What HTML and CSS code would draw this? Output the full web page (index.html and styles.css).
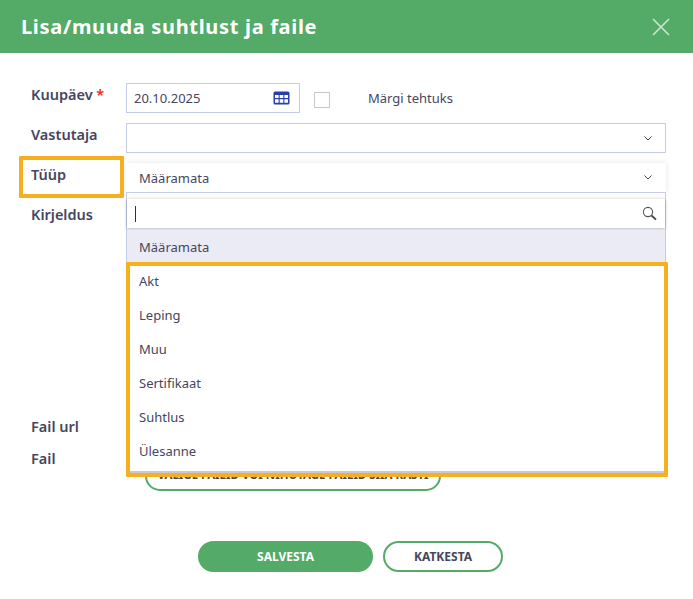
FILE: index.html
```html
<!DOCTYPE html>
<html lang="et">
<head>
<meta charset="utf-8">
<title>Lisa/muuda suhtlust ja faile</title>
<link rel="stylesheet" href="styles.css">
</head>
<body>
<div class="modal">
  <header class="head">
    <h1 class="title">Lisa/muuda suhtlust ja faile</h1>
    <svg class="close" width="18" height="18" viewBox="0 0 18 18"><path d="M1 1l16 16M17 1L1 17" stroke="#cfe6d5" stroke-width="1.6" fill="none"/></svg>
  </header>
  <form class="form">
    <div class="row">
      <label class="label">Kuupäev <span class="req">*</span></label>
      <div class="field date">
        <span>20.10.2025</span>
        <svg width="17" height="14" viewBox="0 0 17 14"><rect x="0.5" y="0.5" width="16" height="13" rx="1.5" fill="#2b3fa8"/><path d="M2 4h3.6v3H2zM6.7 4h3.6v3H6.7zM11.4 4H15v3h-3.6zM2 8.2h3.6v3.6H2zM6.7 8.2h3.6v3.6H6.7zM11.4 8.2H15v3.6h-3.6z" fill="#fff"/></svg>
      </div>
      <span class="check"></span>
      <span class="check-label">Märgi tehtuks</span>
    </div>
    <div class="row">
      <label class="label">Vastutaja</label>
      <div class="field select">
        <span></span>
        <svg class="chev" width="8" height="5" viewBox="0 0 8 5"><path d="M.5.5L4 4 7.5.5" stroke="#3f4160" stroke-width="1" fill="none"/></svg>
      </div>
    </div>
    <div class="row">
      <label class="label">Tüüp</label>
      <div class="field select open">
        <span class="sel-value">Määramata</span>
        <svg class="chev" width="8" height="5" viewBox="0 0 8 5"><path d="M.5.5L4 4 7.5.5" stroke="#3f4160" stroke-width="1" fill="none"/></svg>
        <div class="dropdown">
          <div class="search">
            <span class="caret"></span>
            <svg width="15" height="15" viewBox="0 0 15 15"><circle cx="6" cy="6" r="4.6" stroke="#555" stroke-width="1.1" fill="none"/><path d="M9.5 9.5l4.5 4.2" stroke="#444" stroke-width="1.8" fill="none"/></svg>
          </div>
          <ul class="options">
            <li class="option active">Määramata</li>
            <li class="option">Akt</li>
            <li class="option">Leping</li>
            <li class="option">Muu</li>
            <li class="option">Sertifikaat</li>
            <li class="option">Suhtlus</li>
            <li class="option">Ülesanne</li>
          </ul>
          <div class="mark mark-list"></div>
        </div>
      </div>
      <div class="mark mark-label"></div>
    </div>
    <div class="row row-text">
      <label class="label">Kirjeldus</label>
    </div>
    <div class="row row-url">
      <label class="label">Fail url</label>
    </div>
    <div class="row row-file">
      <label class="label">Fail</label>
      <button type="button" class="upload">VALIGE FAILID VÕI NIHUTAGE FAILID SIIA KASTI</button>
    </div>
    <div class="actions">
      <button type="button" class="btn save">SALVESTA</button>
      <button type="button" class="btn cancel">KATKESTA</button>
    </div>
  </form>
</div>
</body>
</html>
```
FILE: styles.css
```css
* { box-sizing: border-box; }
html, body { margin: 0; height: 100%; background: #fff; }
body { font-family: "Noto Sans", "Open Sans", sans-serif; color: #46465f; overflow: hidden; }
.modal { width: 693px; height: 599px; }
.head {
  height: 53px; background: #54aa67; display: flex; align-items: center;
  justify-content: space-between; padding: 0 23px 0 21px;
}
.title { margin: 0; font-size: 20px; font-weight: 700; letter-spacing: 0.68px; color: #fff; }
.form { padding: 30px 27px 0 31px; }
.row { position: relative; display: flex; align-items: flex-start; height: 30px; margin-bottom: 10px; }
.label { width: 95px; flex: none; font-size: 14.5px; font-weight: 600; line-height: 23px; color: #46465f; }
.req { color: #f0231c; }
.field {
  height: 30px; border: 1px solid #c6cce6; background: #fff; display: flex; align-items: center;
  justify-content: space-between; font-size: 13px; padding: 0 9px 0 7px; color: #46465f;
}
.date { width: 174px; }
.check { width: 16px; height: 16px; border: 1px solid #c8c8c8; margin: 9px 0 0 14px; flex: none; }
.check-label { font-size: 13px; margin: 5px 0 0 38px; line-height: 20px; }
.select { width: 540px; padding-right: 13px; }
.open { position: relative; width: 541px; border: 0; border-bottom: 1px solid #c6cce6; box-shadow: 0 0 6px rgba(0,0,0,.1); padding-left: 13px; padding-right: 14px; }
.dropdown {
  position: absolute; left: 0; top: 30px; width: 540px; height: 280px; background: #fff;
  border: 1px solid #c6cce6; border-top: 0; border-bottom: 2px solid #c9c9d6; z-index: 2;
}
.search {
  height: 29px; margin-top: 6px; display: flex; align-items: center; justify-content: space-between;
  padding: 0 8px; box-shadow: 0 1px 3px rgba(0,0,0,.3), 0 -3px 4px rgba(0,0,0,.03); background: #fff;
}
.caret { width: 1px; height: 16px; background: #333; }
.options { list-style: none; margin: 2px 0 0; padding: 0; }
.option { height: 34px; line-height: 34px; padding-left: 12px; font-size: 13px; }
.active { background: #ebebf5; }
.mark { position: absolute; border: 4px solid #f6b01e; border-radius: 1px; z-index: 3; }
.mark-label { left: -12px; top: -7px; width: 105px; height: 42px; }
.mark-list { left: -1px; top: 69px; width: 542px; height: 215px; }
.row-text { height: 202px; margin-bottom: 10px; }
.row-url { height: 32px; margin-bottom: 0; }
.row-file { height: 47px; margin-bottom: 0; }
.row-file .upload { position: absolute; left: 114px; top: 14px; }
.upload {
  width: 296px; height: 30px; border: 2px solid #54aa67; border-radius: 15px; background: #fff;
  font: 700 11.5px "Noto Sans", sans-serif; color: #46465f; padding: 0 0 3px;
}
.actions { display: flex; gap: 10px; justify-content: flex-start; margin: 47px 0 0 167px; }
.btn { height: 31px; border-radius: 16px; font: 700 12px "Noto Sans", sans-serif; padding: 0; }
.save { width: 175px; background: #54aa67; border: 0; color: #fff; }
.cancel { width: 120px; background: #fff; border: 2px solid #54aa67; color: #46465f; }
```
